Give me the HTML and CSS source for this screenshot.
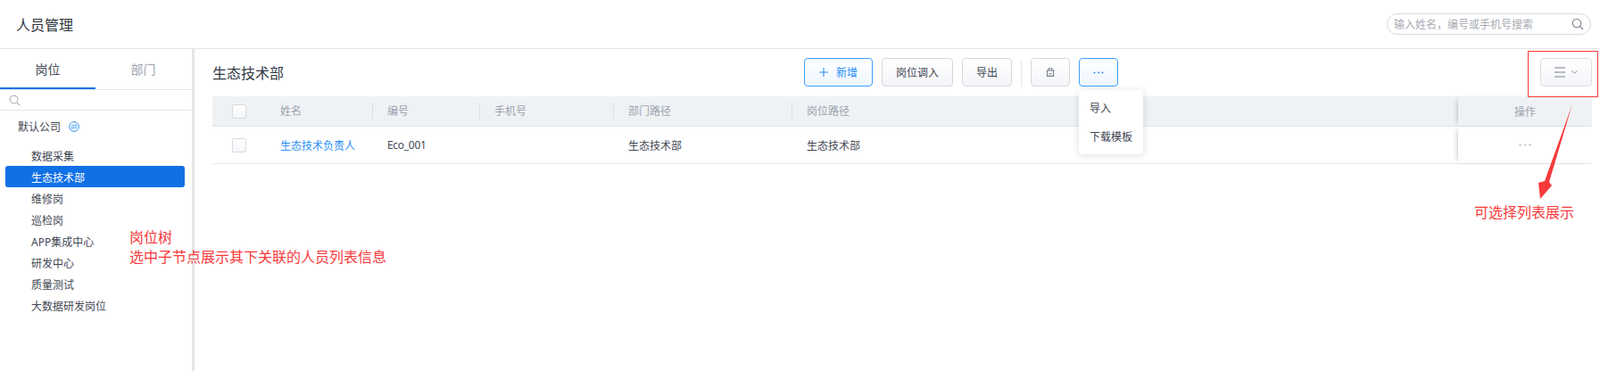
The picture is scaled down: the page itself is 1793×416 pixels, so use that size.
FILE: index.html
```html
<!DOCTYPE html>
<html lang="zh-CN">
<head>
  <meta charset="UTF-8">
  <title>人员管理</title>
  <link rel="stylesheet" href="styles.css">
</head>
<body>

  <header class="top-bar">
    <h1 class="page-title">人员管理</h1>
    <div class="top-search">
      <span class="top-search-text">输入姓名，编号或手机号搜索</span>
      <svg class="icon-search" width="14" height="14" viewBox="0 0 14 14"><circle cx="6" cy="6" r="4.7" fill="none" stroke="#7d848e" stroke-width="1.1"/><path d="M9.5 9.5L13 13" stroke="#7d848e" stroke-width="1.1" fill="none"/></svg>
    </div>
  </header>

  <div class="layout">
    <aside class="sidebar">
      <div class="tabs">
        <div class="tab tab-active">岗位</div>
        <div class="tab">部门</div>
      </div>
      <div class="tree-search">
        <svg width="13" height="13" viewBox="0 0 14 14"><circle cx="6" cy="6" r="4.7" fill="none" stroke="#a9aeb5" stroke-width="1.1"/><path d="M9.5 9.5L13 13" stroke="#a9aeb5" stroke-width="1.1" fill="none"/></svg>
      </div>
      <div class="tree-root">
        <span>默认公司</span>
        <svg width="12" height="12" viewBox="0 0 12 12"><circle cx="6" cy="6" r="5.4" fill="#f2f8fe" stroke="#3b97f3" stroke-width="1"/><path d="M2.8 4.8H9.2L7.6 3.4M9.2 7.2H2.8L4.4 8.6" fill="none" stroke="#3b97f3" stroke-width="0.9"/></svg>
      </div>
      <ul class="tree">
        <li class="tree-item">数据采集</li>
        <li class="tree-item tree-item-active">生态技术部</li>
        <li class="tree-item">维修岗</li>
        <li class="tree-item">巡检岗</li>
        <li class="tree-item">APP集成中心</li>
        <li class="tree-item">研发中心</li>
        <li class="tree-item">质量测试</li>
        <li class="tree-item">大数据研发岗位</li>
      </ul>
    </aside>

    <main class="content">
      <div class="toolbar">
        <h2 class="dept-title">生态技术部</h2>
        <button class="btn btn-primary btn-add">
          <svg width="10" height="10" viewBox="0 0 10 10"><path d="M5 0V10M0 5H10" stroke="#2a8ff7" stroke-width="1.1" fill="none"/></svg>
          <span>新增</span>
        </button>
        <button class="btn btn-move">岗位调入</button>
        <button class="btn btn-export">导出</button>
        <span class="toolbar-divider"></span>
        <button class="btn btn-icon">
          <svg width="10" height="10" viewBox="0 0 10 10"><path d="M0.5 3H9.5M3.2 3V0.8H6.8V3M1.5 3V9.4H8.5V3M3.4 6.8H6.6" fill="none" stroke="#767d87" stroke-width="1.1"/></svg>
        </button>
        <div class="more-wrap">
          <button class="btn btn-icon btn-primary">
            <svg width="12" height="3" viewBox="0 0 12 3"><circle cx="1.5" cy="1.5" r="1" fill="#2a8ff7"/><circle cx="6" cy="1.5" r="1" fill="#2a8ff7"/><circle cx="10.5" cy="1.5" r="1" fill="#2a8ff7"/></svg>
          </button>
          <div class="menu">
            <div class="menu-item">导入</div>
            <div class="menu-item">下载模板</div>
          </div>
        </div>
        <button class="btn btn-view">
          <svg width="12" height="12" viewBox="0 0 12 12"><path d="M0 1H12M0 6H12M0 11H12" stroke="#a3a8b0" stroke-width="1.4" fill="none"/></svg>
          <svg width="7" height="4" viewBox="0 0 7 4"><path d="M0.5 0.5L3.5 3.2L6.5 0.5" stroke="#8f959e" stroke-width="1" fill="none"/></svg>
        </button>
      </div>

      <div class="table">
        <div class="row row-head">
          <div class="cell cell-check"><span class="checkbox"></span></div>
          <div class="cell"><span class="head-label head-first">姓名</span></div>
          <div class="cell"><span class="head-label">编号</span></div>
          <div class="cell"><span class="head-label">手机号</span></div>
          <div class="cell"><span class="head-label">部门路径</span></div>
          <div class="cell"><span class="head-label">岗位路径</span></div>
          <div class="cell cell-fixed">操作</div>
        </div>
        <div class="row row-body">
          <div class="cell cell-check"><span class="checkbox"></span></div>
          <div class="cell cell-text link">生态技术负责人</div>
          <div class="cell cell-text cell-code">Eco_001</div>
          <div class="cell cell-text"></div>
          <div class="cell cell-text">生态技术部</div>
          <div class="cell cell-text">生态技术部</div>
          <div class="cell cell-fixed">
            <svg width="14" height="3" viewBox="0 0 14 3"><circle cx="1.5" cy="1.5" r="1.3" fill="#c6cad6"/><circle cx="7" cy="1.5" r="1.3" fill="#c6cad6"/><circle cx="12.5" cy="1.5" r="1.3" fill="#c6cad6"/></svg>
          </div>
        </div>
      </div>
    </main>
  </div>

  <!-- red review notes on top of the page -->
  <div class="note note-tree">岗位树<br>选中子节点展示其下关联的人员列表信息</div>
  <div class="note note-view">可选择列表展示</div>
  <div class="note-box"></div>
  <svg class="note-arrow" width="44" height="110" viewBox="0 0 44 110"><polygon points="40,1 14,88 17,92 4,107 2,89 9,87" fill="#f63a3a"/></svg>

</body>
</html>
```

FILE: styles.css
```css
* {
  box-sizing: border-box;
}
html, body {
  margin: 0;
  height: 100%;
}
body {
  font-family: "Noto Sans", "Noto Sans CJK SC", sans-serif;
  font-size: 12px;
  color: #3f4753;
  background: #fff;
  overflow: hidden;
}

/* top bar */
.top-bar {
  height: 55px;
  padding: 0 10px 0 18px;
  display: flex;
  align-items: center;
  justify-content: space-between;
  border-bottom: 1px solid #e4e6ea;
}
.page-title {
  margin: 0;
  font-size: 16px;
  font-weight: 400;
  color: #2f3743;
}
.top-search {
  width: 229px;
  height: 24px;
  padding: 0 7px 0 7px;
  display: flex;
  align-items: center;
  justify-content: space-between;
  border: 1px solid #d9dadd;
  border-radius: 12px;
}
.top-search-text {
  color: #a6abb3;
}

/* left tree */
.layout {
  display: flex;
  height: 361px;
}
.sidebar {
  width: 218px;
  flex: none;
  border-right: 3px solid #e4e6ea;
}
.tabs {
  display: flex;
  height: 46px;
  border-bottom: 1px solid #e2e4e8;
}
.tab {
  width: 107px;
  font-size: 14px;
  line-height: 45px;
  text-align: center;
  color: #9ba3ae;
}
.tab-active {
  height: 45px;
  color: #3f4753;
  border-bottom: 2px solid #1071e5;
}
.tree-search {
  height: 23px;
  padding-left: 10px;
  display: flex;
  align-items: center;
  border-bottom: 1px solid #e2e4e8;
}
.tree-root {
  height: 36px;
  padding-left: 20px;
  display: flex;
  align-items: center;
  gap: 9px;
}
.tree {
  list-style: none;
  margin: 3px 0 0;
  padding: 0;
}
.tree-item {
  height: 24px;
  margin: 0 8px 0 6px;
  padding-left: 29px;
  line-height: 26px;
  border-radius: 3px;
}
.tree-item-active {
  margin-top: -1px;
  margin-bottom: 1px;
  line-height: 28px;
  background: #1071e5;
  color: #fff;
}

/* right part */
.content {
  flex: 1;
  min-width: 0;
  padding: 10px 9px 0 20px;
}
.toolbar {
  display: flex;
  align-items: center;
  height: 32px;
  margin-bottom: 11px;
}
.dept-title {
  flex: 0 0 663px;
  margin: 0;
  font-size: 16px;
  font-weight: 400;
  color: #2f3743;
}
.btn {
  height: 32px;
  margin-right: 10px;
  padding: 0;
  display: flex;
  align-items: center;
  justify-content: center;
  font-family: inherit;
  font-size: 12px;
  color: #3f4753;
  border: 1px solid #d5d7da;
  border-radius: 4px;
  background: linear-gradient(#fff, #f3f5f8);
}
.btn-primary {
  color: #2a8ff7;
  border-color: #3ea0ff;
  background: linear-gradient(#fff, #eef6ff);
}
.btn-add {
  width: 77px;
  gap: 9px;
}
.btn-move {
  width: 80px;
}
.btn-export {
  width: 56px;
}
.btn-icon {
  width: 44px;
}
.toolbar-divider {
  width: 1px;
  height: 30px;
  margin: 2px 10px 0 0;
  background: #e4e6ea;
}
.more-wrap {
  position: relative;
}
.more-wrap .btn {
  margin-right: 0;
}
.menu {
  position: absolute;
  top: 36px;
  left: 0;
  width: 72px;
  height: 72px;
  padding: 5px 0 0;
  background: #fff;
  border-radius: 4px;
  box-shadow: 0 1px 8px rgba(40, 50, 70, 0.16);
  z-index: 2;
}
.menu-item {
  height: 32px;
  padding-left: 12px;
  line-height: 32px;
}
.btn-view {
  width: 58px;
  margin: 0 0 0 auto;
  gap: 7px;
  border-color: #dcdee1;
}

/* table */
.row {
  display: grid;
  grid-template-columns: 59px 120px 120px 150px 200px 1fr 150px;
  align-items: center;
}
.row-head {
  height: 34px;
  background: #eff2f5;
  color: #9ba3ae;
  border-bottom: 1px solid #e4e6ea;
}
.row-body {
  height: 42px;
  border-bottom: 1px solid #e4e6ea;
}
.cell {
  height: 100%;
  display: flex;
  align-items: center;
}
.cell-check {
  padding-left: 22px;
}
.cell-text {
  padding-left: 17px;
}
.cell-code {
  letter-spacing: -0.3px;
}
.head-label {
  height: 18px;
  padding-left: 16px;
  line-height: 18px;
  border-left: 1px solid #dcdfe4;
}
.head-first {
  border-left: 0;
  padding-left: 17px;
}
.cell-fixed {
  justify-content: center;
  background: inherit;
  box-shadow: -4px 0 5px -3px rgba(60, 70, 85, 0.28);
}
.row-body .cell-fixed {
  background: #fff;
}
.checkbox {
  width: 16px;
  height: 16px;
  border: 1px solid #d9dbde;
  border-radius: 2px;
  background: linear-gradient(#fff, #f3f5f8);
}
.link {
  color: #2a8ff7;
}

/* review notes */
.note {
  position: absolute;
  font-size: 16px;
  line-height: 22px;
  color: #f63a3a;
  white-space: nowrap;
}
.note-tree {
  top: 255px;
  left: 145px;
}
.note-view {
  top: 227px;
  left: 1652px;
}
.note-box {
  position: absolute;
  top: 57px;
  left: 1712px;
  width: 79px;
  height: 52px;
  border: 1px solid #f63a3a;
}
.note-arrow {
  position: absolute;
  top: 116px;
  left: 1722px;
}
```
